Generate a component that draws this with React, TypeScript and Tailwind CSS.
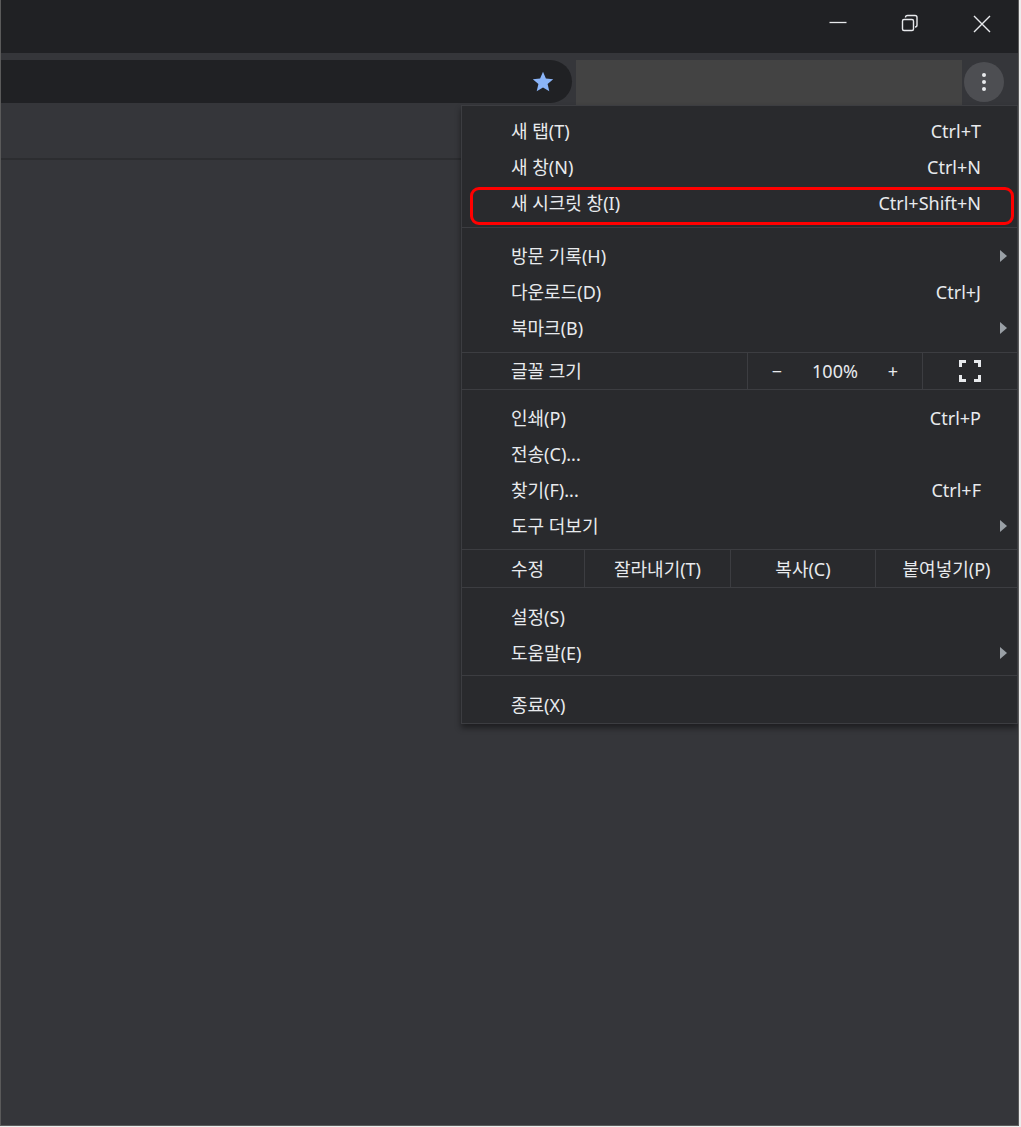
const Item = ({ label, shortcut, arrow }: { label: string; shortcut?: string; arrow?: boolean }) => (
    <div className={`flex h-9 items-center justify-between pl-[49px] ${arrow ? 'pr-[9px]' : 'pr-[36px]'}`}>
        <span>{label}</span>
        {shortcut && <span>{shortcut}</span>}
        {arrow && (
            <svg width="8" height="12" viewBox="0 0 8 12">
                <path d="M0 0 L7 6 L0 12 Z" fill="#9aa0a6" />
            </svg>
        )}
    </div>
);

const Sep = () => <div className="h-px bg-[#3c3d41]" />;

export default function App() {
    return (
        <div className="h-[1127px] w-[1021px] bg-[#ededed] font-['Noto_Sans','Noto_Sans_CJK_KR',sans-serif]">
            <div className="relative flex h-[1126px] w-[1019px] flex-col overflow-hidden border-x border-b border-[#5a5a5a] bg-[#35363a]">
                {/* title bar */}
                <div className="flex h-[53px] shrink-0 items-start justify-end bg-[#202124] pr-[26px] pt-[14px] text-[#e8eaed]">
                    <svg width="20" height="20" viewBox="0 0 20 20" className="mr-[52px]">
                        <path d="M1.5 8.5 H18.5" stroke="#e8eaed" strokeWidth="1.3" />
                    </svg>
                    <svg width="20" height="20" viewBox="0 0 20 20" className="mr-[52px]">
                        <rect x="2.5" y="5.5" width="11" height="11" rx="1.5" fill="none" stroke="#e8eaed" strokeWidth="1.4" />
                        <path d="M5.5 3.5 Q5.5 1.5 7.5 1.5 H15 Q17 1.5 17 3.5 V11 Q17 13 15 13" fill="none" stroke="#e8eaed" strokeWidth="1.4" />
                    </svg>
                    <svg width="20" height="20" viewBox="0 0 20 20">
                        <path d="M2 2 L18 18 M18 2 L2 18" stroke="#e8eaed" strokeWidth="1.4" />
                    </svg>
                </div>

                {/* toolbar */}
                <div className="flex h-[52px] shrink-0 items-start pt-[7px]">
                    <div className="flex h-[43px] w-[571px] items-center justify-end rounded-r-[22px] bg-[#202124] pr-[17px]">
                        <svg width="24" height="24" viewBox="0 0 24 24">
                            <path d="M12 1.8 L14.9 8.6 L22.2 9.2 L16.6 14 L18.3 21.2 L12 17.4 L5.7 21.2 L7.4 14 L1.8 9.2 L9.1 8.6 Z" fill="#8ab4f8" />
                        </svg>
                    </div>
                    <div className="ml-[4px] h-[45px] w-[386px] bg-[#434343]" />
                    <div className="ml-[2px] mt-[2px] flex h-[40px] w-[40px] flex-col items-center justify-center gap-[3px] rounded-full bg-[#4d4e52]">
                        <span className="h-[4px] w-[4px] rounded-full bg-[#e8eaed]" />
                        <span className="h-[4px] w-[4px] rounded-full bg-[#e8eaed]" />
                        <span className="h-[4px] w-[4px] rounded-full bg-[#e8eaed]" />
                    </div>
                </div>

                {/* bookmark bar */}
                <div className="h-[55px] shrink-0 border-b-2 border-[#2c2d30]" />
                <div className="flex-1" />

                {/* app menu */}
                <div className="absolute left-[460px] top-[105px] w-[557px] border border-[#3c3d41] bg-[#292a2d] text-[18px] leading-none text-[#e8eaed] shadow-[0_4px_6px_rgba(0,0,0,0.45)]">
                    <div className="pb-[6px] pt-[7px]">
                        <Item label="새 탭(T)" shortcut="Ctrl+T" />
                        <Item label="새 창(N)" shortcut="Ctrl+N" />
                        <Item label="새 시크릿 창(I)" shortcut="Ctrl+Shift+N" />
                    </div>
                    <Sep />
                    <div className="pb-[6px] pt-[10px]">
                        <Item label="방문 기록(H)" arrow />
                        <Item label="다운로드(D)" shortcut="Ctrl+J" />
                        <Item label="북마크(B)" arrow />
                    </div>
                    <Sep />
                    <div className="flex h-9 items-center">
                        <span className="flex-1 pl-[49px]">글꼴 크기</span>
                        <div className="grid h-full w-[176px] grid-cols-3 items-center border-x border-[#3c3d41] text-center">
                            <span>−</span>
                            <span>100%</span>
                            <span>+</span>
                        </div>
                        <div className="flex h-full w-[94px] items-center justify-center">
                            <svg width="22" height="22" viewBox="0 0 22 22">
                                <path d="M1.5 7 V1.5 H7 M15 1.5 H20.5 V7 M20.5 15 V20.5 H15 M7 20.5 H1.5 V15" fill="none" stroke="#e8eaed" strokeWidth="3" />
                            </svg>
                        </div>
                    </div>
                    <Sep />
                    <div className="pb-[5px] pt-[10px]">
                        <Item label="인쇄(P)" shortcut="Ctrl+P" />
                        <Item label="전송(C)..." />
                        <Item label="찾기(F)..." shortcut="Ctrl+F" />
                        <Item label="도구 더보기" arrow />
                    </div>
                    <Sep />
                    <div className="flex h-[37px] items-center">
                        <span className="w-[122px] pl-[49px]">수정</span>
                        <div className="flex h-full flex-1">
                            <span className="flex w-[146px] items-center justify-center border-l border-[#3c3d41]">잘라내기(T)</span>
                            <span className="flex w-[145px] items-center justify-center border-l border-[#3c3d41]">복사(C)</span>
                            <span className="flex flex-1 items-center justify-center border-l border-[#3c3d41]">붙여넣기(P)</span>
                        </div>
                    </div>
                    <Sep />
                    <div className="pb-[4px] pt-[11px]">
                        <Item label="설정(S)" />
                        <Item label="도움말(E)" arrow />
                    </div>
                    <Sep />
                    <div className="pt-[11px]">
                        <Item label="종료(X)" />
                    </div>

                    {/* highlight box */}
                    <div className="absolute left-[8px] top-[81px] h-[38px] w-[544px] rounded-[9px] border-[3px] border-[#ff0000]" />
                </div>
            </div>
        </div>
    );
}
